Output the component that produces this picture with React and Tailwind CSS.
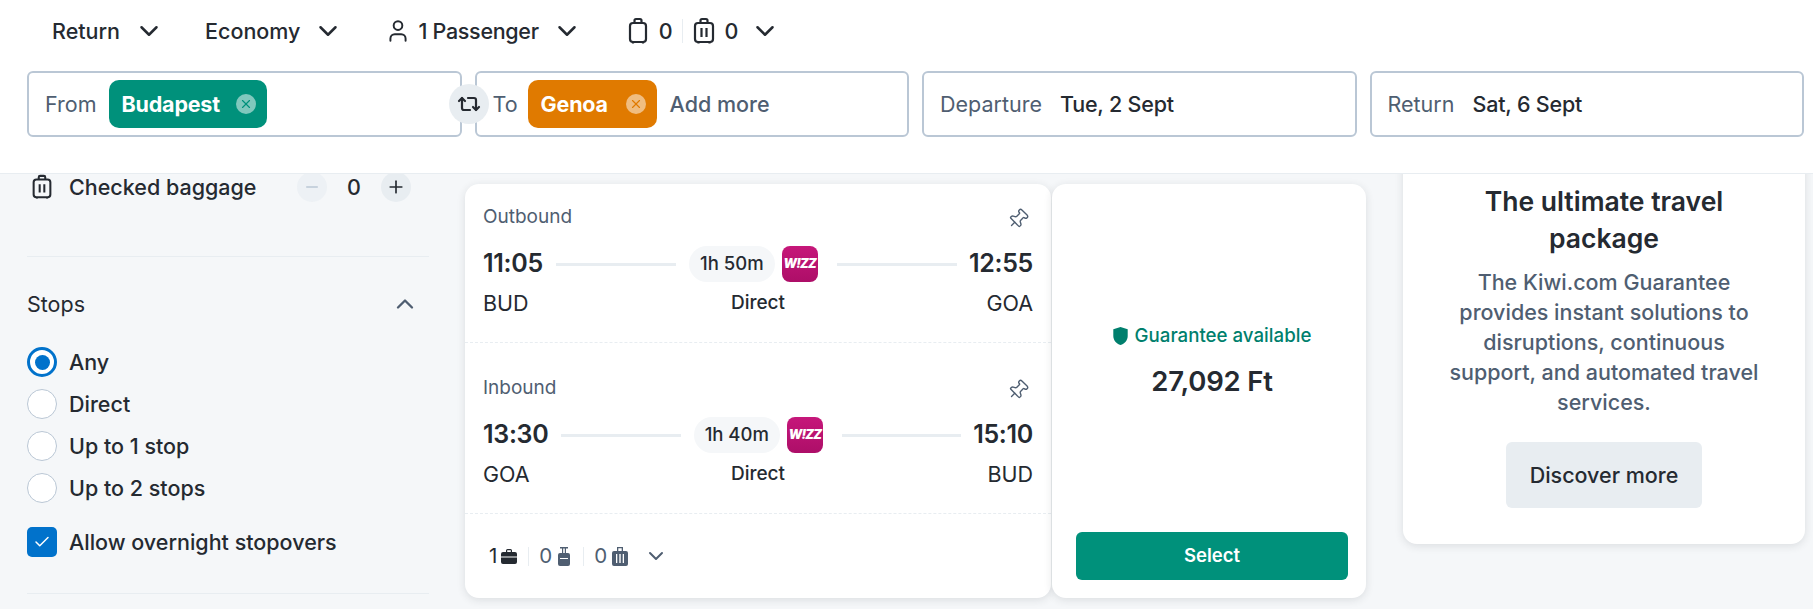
import { ChevronDown, ChevronUp, Check, Minus, Plus, Pin, Repeat2, User, X } from "lucide-react";

const font = { fontFamily: "Inter, sans-serif" };

function CabinBag({ className }) {
  return (
    <svg viewBox="0 0 20 28" className={className} fill="none" stroke="currentColor" strokeWidth="2.2" strokeLinejoin="round">
      <path d="M6.5 6V3.5a1.5 1.5 0 0 1 1.5-1.5h4a1.5 1.5 0 0 1 1.5 1.5V6" />
      <rect x="2" y="6" width="16" height="19" rx="3" />
      <path d="M5 25v1.5M15 25v1.5" />
    </svg>
  );
}

function CheckedBag({ className }) {
  return (
    <svg viewBox="0 0 22 28" className={className} fill="none" stroke="currentColor" strokeWidth="2.2" strokeLinejoin="round">
      <path d="M7.5 6V3.5A1.5 1.5 0 0 1 9 2h4a1.5 1.5 0 0 1 1.5 1.5V6" />
      <rect x="2" y="6" width="18" height="19" rx="3" />
      <path d="M8.5 11v9M13.5 11v9M5.5 25v1.5M16.5 25v1.5" />
    </svg>
  );
}

function Pill({ name, bg, iconColor, className }) {
  return (
    <div className={`flex h-12 items-center rounded-[10px] pl-[13px] pr-[11px] ${bg} ${className}`}>
      <span className="text-[21.5px] font-bold tracking-[-0.2px] text-white">{name}</span>
      <span className="ml-auto flex h-5 w-5 items-center justify-center rounded-full bg-white/50">
        <X size={14} strokeWidth={2} className={iconColor} />
      </span>
    </div>
  );
}

function Radio({ label, checked }) {
  return (
    <div className="flex h-[42px] items-center gap-3">
      {checked ? (
        <span className="flex h-[30px] w-[30px] items-center justify-center rounded-full border-[3px] border-[#0172cb] bg-white">
          <span className="h-[15px] w-[15px] rounded-full bg-[#0172cb]" />
        </span>
      ) : (
        <span className="h-[30px] w-[30px] rounded-full border border-[#bac7d5] bg-white" />
      )}
      <span className="text-[21.5px] font-medium text-[#252a31]">{label}</span>
    </div>
  );
}

function Wizz() {
  return (
    <div className="flex h-9 w-9 items-center justify-center overflow-hidden rounded-lg bg-gradient-to-b from-[#c6177a] to-[#ad0e68]">
      <span className="text-[12.5px] font-black italic tracking-[-0.8px] text-white">W!ZZ</span>
    </div>
  );
}

function Leg({ title, from, to, dep, arr, duration, className }) {
  return (
    <div className={`px-[18px] ${className}`}>
      <div className="flex h-6 items-center justify-between">
        <span className="text-[19px] text-[#4f5e71]">{title}</span>
        <Pin size={22} strokeWidth={1.5} className="mr-[4px] mt-[3px] rotate-45 text-[#4f5e71]" />
      </div>
      <div className="mt-[17px] flex h-9 items-center">
        <span className="text-[25px] font-semibold tracking-[-0.3px] text-[#252a31]">{dep}</span>
        <div className="ml-[13px] mr-[13px] h-[3px] flex-1 bg-[#e8edf1]" />
        <div className="flex h-9 items-center rounded-full bg-[#f5f7f9] px-[11px] text-[18.5px] font-medium text-[#252a31]">{duration}</div>
        <div className="ml-[7px]">
          <Wizz />
        </div>
        <div className="ml-[19px] mr-[12px] h-[3px] flex-1 bg-[#e8edf1]" />
        <span className="text-[25px] font-semibold tracking-[-0.3px] text-[#252a31]">{arr}</span>
      </div>
      <div className="mt-[3px] grid h-[36px] grid-cols-3 items-center text-[#252a31]">
        <span className="text-[21.5px]">{from}</span>
        <span className="text-center text-[19px] font-medium">Direct</span>
        <span className="text-right text-[21.5px]">{to}</span>
      </div>
    </div>
  );
}

export default function App() {
  return (
    <div style={font} className="flex h-[609px] w-[1813px] flex-col overflow-hidden bg-[#f5f7f9]">
      <header className="relative z-10 h-[174px] shrink-0 border-b border-[#e8edf1] bg-white">
        <div className="flex h-[62px] items-center pl-[52px] text-[21.5px] font-medium text-[#252a31]">
          <span>Return</span>
          <ChevronDown size={30} strokeWidth={2} className="ml-[14px]" />
          <span className="ml-[41px]">Economy</span>
          <ChevronDown size={30} strokeWidth={2} className="ml-[13px]" />
          <User size={26} strokeWidth={1.8} className="ml-[42px]" />
          <span className="ml-[7px] tracking-[-0.3px]">1 Passenger</span>
          <ChevronDown size={30} strokeWidth={2} className="ml-[13px]" />
          <CabinBag className="ml-[46px] h-7 w-5" />
          <span className="ml-[11px]">0</span>
          <span className="ml-[9px] h-[24px] w-px bg-[#e8edf1]" />
          <CheckedBag className="ml-[10px] h-7 w-[22px]" />
          <span className="ml-[10px]">0</span>
          <ChevronDown size={30} strokeWidth={2} className="ml-[11px]" />
        </div>
        <div className="relative ml-[27px] mt-[9px] grid w-[1777px] grid-cols-4 gap-[13px]">
          <div className="flex h-[66px] items-center rounded-md border-2 border-[#bac7d5] bg-white pl-[16px] text-[21.5px]">
            <span className="text-[#4f5e71]">From</span>
            <Pill name="Budapest" bg="bg-[#00917b]" iconColor="text-[#00917b]" className="ml-[12px] w-[158px]" />
          </div>
          <div className="flex h-[66px] items-center rounded-md border-2 border-[#bac7d5] bg-white pl-[16px] text-[21.5px]">
            <span className="text-[#4f5e71]">To</span>
            <Pill name="Genoa" bg="bg-[#e07a00]" iconColor="text-[#e07a00]" className="ml-[10px] w-[129px]" />
            <span className="ml-[13px] font-medium text-[#4f5e71]">Add more</span>
          </div>
          <div className="flex h-[66px] items-center rounded-md border-2 border-[#bac7d5] bg-white pl-[16px] text-[21.5px]">
            <span className="text-[#4f5e71]">Departure</span>
            <span className="ml-[18px] font-medium tracking-[-0.2px] text-[#252a31]">Tue, 2 Sept</span>
          </div>
          <div className="flex h-[66px] items-center rounded-md border-2 border-[#bac7d5] bg-white pl-[16px] text-[21.5px]">
            <span className="text-[#4f5e71]">Return</span>
            <span className="ml-[18px] font-medium tracking-[-0.2px] text-[#252a31]">Sat, 6 Sept</span>
          </div>
          <button className="absolute left-[422px] top-[13px] flex h-10 w-10 items-center justify-center rounded-full bg-[#e8edf1] text-[#252a31]">
            <Repeat2 size={24} strokeWidth={2.2} />
          </button>
        </div>
      </header>

      <main className="flex min-h-0 flex-1 items-start pl-[27px]">
        <aside className="w-[402px] shrink-0">
          <div className="-mt-[2px] flex h-[30px] items-center">
            <CheckedBag className="ml-[4px] h-[26px] w-[22px] text-[#252a31]" />
            <span className="ml-[16px] w-[228px] text-[21.5px] font-medium text-[#252a31]">Checked baggage</span>
            <span className="flex h-[30px] w-[30px] items-center justify-center rounded-full bg-[#e8edf1]/60">
              <Minus size={18} className="text-[#bac7d5]" />
            </span>
            <span className="w-[54px] text-center text-[21.5px] font-medium text-[#252a31]">0</span>
            <span className="flex h-[30px] w-[30px] items-center justify-center rounded-full bg-[#e8edf1]">
              <Plus size={20} className="text-[#252a31]" />
            </span>
          </div>
          <div className="mt-[54px] h-px bg-[#e8edf1]" />
          <div className="mt-[33px] flex h-7 items-center justify-between pr-[10px]">
            <span className="text-[21.5px] text-[#252a31]">Stops</span>
            <ChevronUp size={28} strokeWidth={2} className="text-[#4f5e71]" />
          </div>
          <div className="mt-[23px]">
            <Radio label="Any" checked />
            <Radio label="Direct" />
            <Radio label="Up to 1 stop" />
            <Radio label="Up to 2 stops" />
          </div>
          <div className="mt-[18px] flex h-[30px] items-center gap-3">
            <span className="flex h-[30px] w-[30px] items-center justify-center rounded-[5px] bg-[#0172cb]">
              <Check size={18} strokeWidth={2} className="text-white" />
            </span>
            <span className="text-[21.5px] font-medium text-[#252a31]">Allow overnight stopovers</span>
          </div>
          <div className="mt-[36px] h-px bg-[#e8edf1]" />
        </aside>

        <section className="ml-[36px] mt-[10px] flex h-[414px] w-[901px] shrink-0">
          <div className="flex w-[586px] flex-col rounded-[14px] bg-white shadow-[0_2px_8px_rgba(37,42,49,0.12)]">
            <Leg title="Outbound" from="BUD" to="GOA" dep="11:05" arr="12:55" duration="1h 50m" className="h-[159px] border-b border-dashed border-[#e8edf1] pt-[21px]" />
            <Leg title="Inbound" from="GOA" to="BUD" dep="13:30" arr="15:10" duration="1h 40m" className="h-[171px] border-b border-dashed border-[#e8edf1] pt-[33px]" />
            <div className="flex flex-1 items-center pl-[24px] text-[20.5px] text-[#4f5e71]">
              <span className="text-[#252a31]">1</span>
              <svg viewBox="0 0 16 15" className="ml-[4px] h-[15px] w-4 text-[#252a31]" fill="currentColor">
                <path d="M5 3V1.5A1.5 1.5 0 0 1 6.5 0h3A1.5 1.5 0 0 1 11 1.5V3h3a2 2 0 0 1 2 2v2.5H0V5a2 2 0 0 1 2-2h3Zm1.2 0h3.6V1.2H6.2V3ZM0 8.5h16V13a2 2 0 0 1-2 2H2a2 2 0 0 1-2-2V8.5Z" />
              </svg>
              <span className="ml-[11px] h-[19px] w-px bg-[#e8edf1]" />
              <span className="ml-[10px]">0</span>
              <svg viewBox="0 0 12 19" className="ml-[6px] h-[19px] w-3" fill="currentColor">
                <path d="M2 0h8v1.5H8V6h2a2 2 0 0 1 2 2v9a2 2 0 0 1-2 2H2a2 2 0 0 1-2-2V8a2 2 0 0 1 2-2h2V1.5H2V0Zm3.2 1.5V6h1.6V1.5H5.2ZM2 11v1h8v-1H2Z" fillRule="evenodd" />
              </svg>
              <span className="ml-[13px] h-[19px] w-px bg-[#e8edf1]" />
              <span className="ml-[10px]">0</span>
              <svg viewBox="0 0 16 19" className="ml-[5px] h-[19px] w-4" fill="currentColor">
                <path d="M5 0h6v4h3a2 2 0 0 1 2 2v11a2 2 0 0 1-2 2H2a2 2 0 0 1-2-2V6a2 2 0 0 1 2-2h3V0Zm1.3 1.3V4h3.4V1.3H6.3ZM4 7v9h1.3V7H4Zm3.3 0v9h1.4V7H7.3Zm3.4 0v9H12V7h-1.3Z" fillRule="evenodd" />
              </svg>
              <ChevronDown size={24} strokeWidth={2} className="ml-[16px]" />
            </div>
          </div>
          <div className="ml-px flex w-[314px] flex-col items-center rounded-[14px] bg-white pl-[6px] shadow-[0_2px_8px_rgba(37,42,49,0.12)]">
            <div className="mt-[138px] flex items-center gap-[7px]">
              <svg viewBox="0 0 16 20" className="h-[18px] w-[15px] text-[#007f6d]" fill="currentColor">
                <path d="M8 0 16 2.5V10c0 5-3.5 8.5-8 10-4.5-1.5-8-5-8-10V2.5L8 0Z" />
              </svg>
              <span className="text-[18.7px] font-medium text-[#007f6d]">Guarantee available</span>
            </div>
            <div className="mt-[11px] text-[27.5px] font-semibold tracking-[-0.2px] text-[#252a31]">27,092 Ft</div>
            <button className="mt-auto mb-[18px] h-12 w-[272px] rounded-md bg-[#00917b] text-[18.5px] font-semibold text-white">Select</button>
          </div>
        </section>

        <section className="-mt-[20px] ml-[37px] flex h-[390px] w-[402px] shrink-0 flex-col items-center rounded-[14px] bg-white pt-[29px] shadow-[0_2px_8px_rgba(37,42,49,0.12)]">
          <h2 className="w-[300px] text-center text-[26.5px] font-semibold leading-[37px] text-[#252a31]">The ultimate travel package</h2>
          <p className="mt-[10px] w-[330px] text-center text-[21.5px] font-medium leading-[30px] text-[#4f5e71]">
            The Kiwi.com Guarantee provides instant solutions to disruptions, continuous support, and automated travel services.
          </p>
          <button className="mt-[25px] h-[66px] w-[196px] rounded-md bg-[#e8edf1] text-[21.5px] font-medium text-[#252a31]">Discover more</button>
        </section>
      </main>
    </div>
  );
}
